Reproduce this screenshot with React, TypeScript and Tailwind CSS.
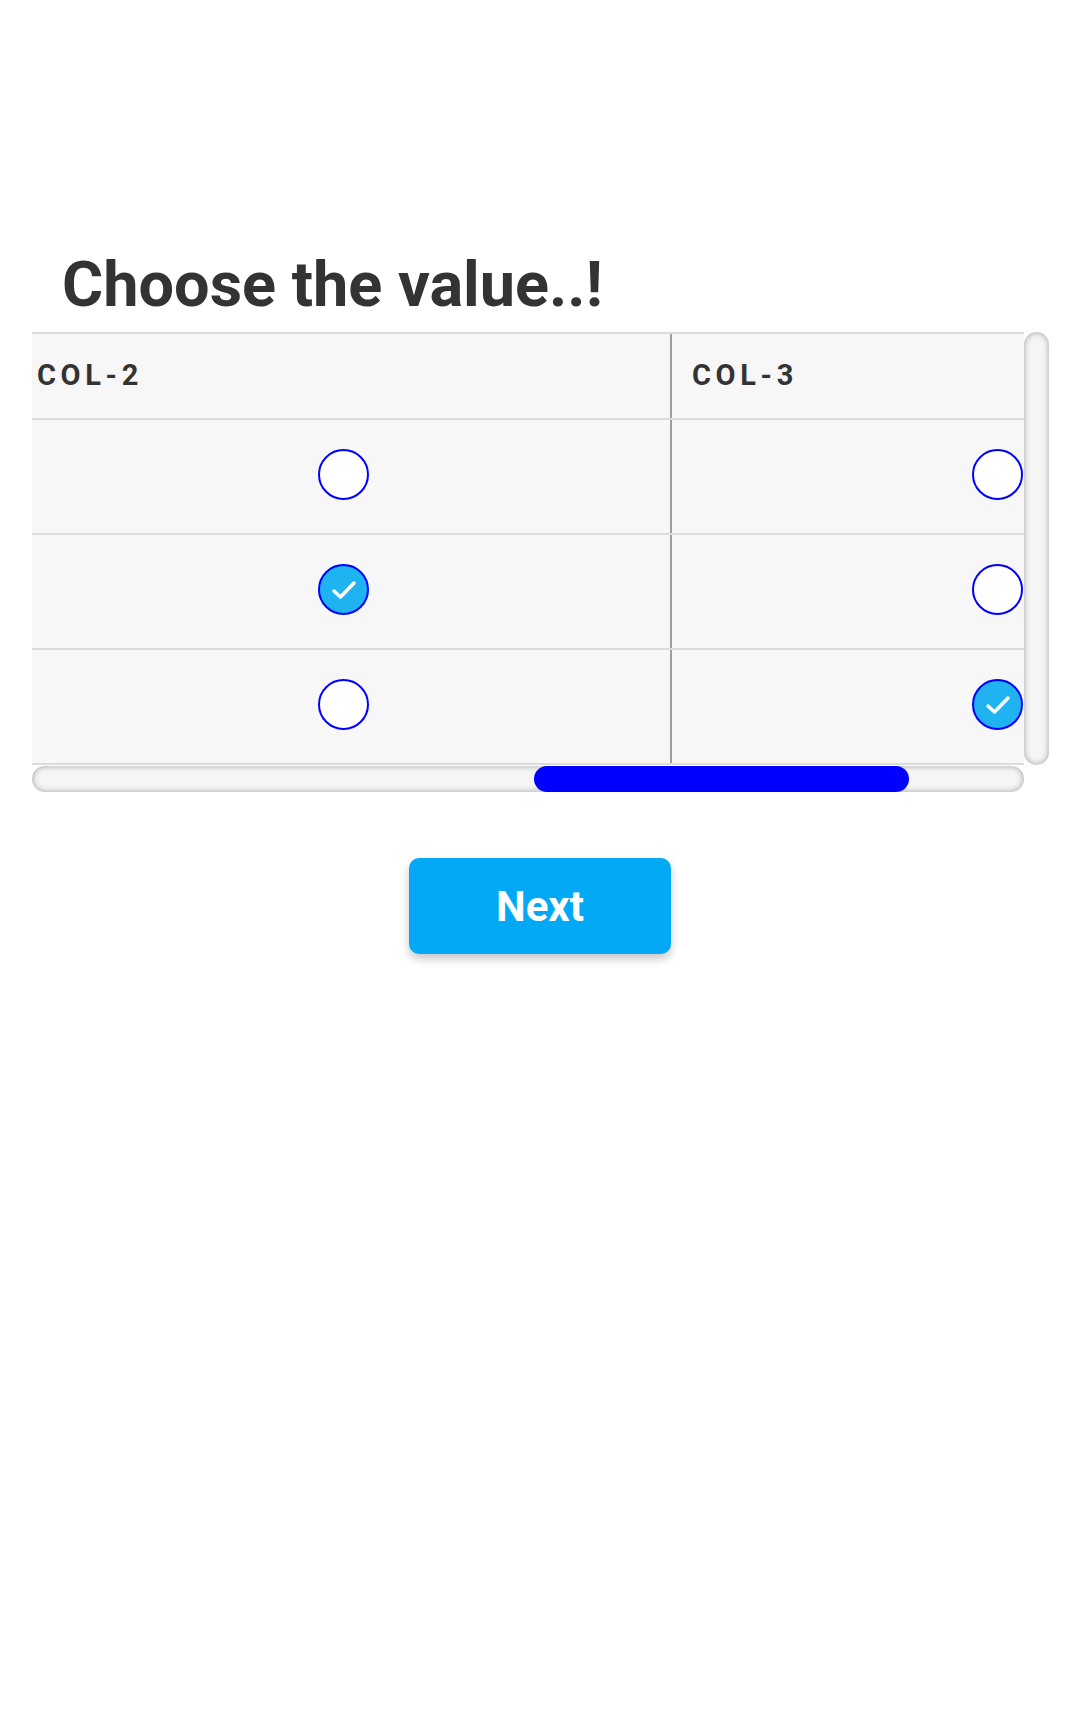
import React, { useState } from "react";

const rows = [
  { id: 1, value: "" },
  { id: 2, value: "col-2" },
  { id: 3, value: "col-3" },
];

const Radio = ({ checked, onClick }: { checked: boolean; onClick: () => void }) => (
  <button
    onClick={onClick}
    className={`w-[51px] h-[51px] rounded-full border-2 border-[#0000ff] flex items-center justify-center ${
      checked ? "bg-[#1fb3f1]" : "bg-white"
    }`}
  >
    {checked && (
      <svg width="51" height="51" viewBox="0 0 51 51" className="shrink-0">
        <polyline
          points="16,27 22.5,33 36,19"
          fill="none"
          stroke="white"
          strokeWidth="3.5"
          strokeLinecap="round"
          strokeLinejoin="round"
        />
      </svg>
    )}
  </button>
);

const App = () => {
  const [answers, setAnswers] = useState(rows.map((r) => r.value));

  const pick = (i: number, v: string) => {
    const next = [...answers];
    next[i] = v;
    setAnswers(next);
  };

  return (
    <div className="min-h-screen bg-white pt-[247px] font-[family-name:Roboto,sans-serif]">
      <h1 className="pl-[62px] text-[63px] leading-[75px] font-bold text-[#333333]">
        Choose the value..!
      </h1>

      <div className="mt-[10px] ml-[32px] flex items-start">
        <div className="flex flex-col">
          {/* table viewport, scrolled a little to the right */}
          <div className="w-[992px] overflow-hidden">
            <div className="w-[1306px] -ml-[15px] bg-[#f7f7f7]">
              <div className="grid grid-cols-[655px_651px] border-t-2 border-b-2 border-[#dcdcdc] h-[88px]">
                <div className="border-r-2 border-[#9e9e9e] flex items-center pl-[20px]">
                  <span className="text-[29px] font-bold tracking-[0.16em] text-[#333333]">COL-2</span>
                </div>
                <div className="flex items-center pl-[20px]">
                  <span className="text-[29px] font-bold tracking-[0.16em] text-[#333333]">COL-3</span>
                </div>
              </div>

              {rows.map((row, i) => (
                <div
                  key={row.id}
                  className="grid grid-cols-[655px_651px] border-b-2 border-[#dcdcdc] h-[115px]"
                >
                  <div className="border-r-2 border-[#9e9e9e] flex items-center justify-center pb-[4px]">
                    <Radio checked={answers[i] === "col-2"} onClick={() => pick(i, "col-2")} />
                  </div>
                  <div className="flex items-center justify-center pb-[4px]">
                    <Radio checked={answers[i] === "col-3"} onClick={() => pick(i, "col-3")} />
                  </div>
                </div>
              ))}
            </div>
          </div>

          {/* horizontal scrollbar */}
          <div className="mt-px w-[992px] h-[26px] rounded-full bg-[#f5f5f5] shadow-[inset_0_0_6px_rgba(0,0,0,0.35)] flex">
            <div className="ml-[502px] w-[375px] h-full rounded-full bg-[#0000ff]" />
          </div>
        </div>

        {/* vertical scrollbar */}
        <div className="w-[25px] h-[433px] rounded-full bg-[#f5f5f5] shadow-[inset_0_0_6px_rgba(0,0,0,0.35)]" />
      </div>

      <div className="mt-[66px] flex justify-center">
        <button className="w-[262px] h-[96px] rounded-[10px] bg-[#03a9f4] text-white text-[42px] font-bold shadow-[0_5px_10px_rgba(0,0,0,0.22)]">
          Next
        </button>
      </div>
    </div>
  );
};

export default App;
